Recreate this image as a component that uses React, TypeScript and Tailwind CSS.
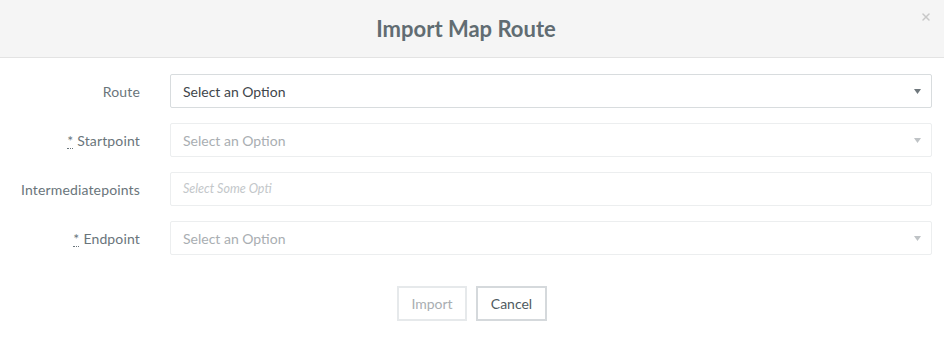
import { X } from 'lucide-react'

function Caret({ light }: { light?: boolean }) {
  return (
    <svg width="7" height="5" viewBox="0 0 7 5" className={light ? 'text-[#bfc3c6]' : 'text-[#6f777c]'}>
      <path d="M0 0 L7 0 L3.5 5 Z" fill="currentColor" />
    </svg>
  )
}

function Row({ label, required, children }: { label: string; required?: boolean; children: React.ReactNode }) {
  return (
    <div className="flex items-center">
      <label className="w-[140px] text-right text-[14px] tracking-[0.15px] text-[#6a757b] shrink-0">
        {required && (
          <abbr className="mr-1 no-underline border-b border-dotted border-[#6a757b] leading-[8px] inline-block h-[12px]">*</abbr>
        )}
        {label}
      </label>
      <div className="ml-[30px] flex-1 mr-[12px]">{children}</div>
    </div>
  )
}

export default function App() {
  return (
    <div className="w-[944px] h-[337px] bg-white font-['Lato',sans-serif]">
      {/* Header */}
      <div className="relative h-[58px] bg-[#f5f5f5] border-b border-[#e3e3e3] flex items-center justify-center">
        <h2 className="pr-[12px] text-[22px] font-bold text-[#616c72]">
          Import Map Route
        </h2>
        <button className="absolute right-[12px] top-[11px] text-[#c8c8c8]">
          <X className="h-[12px] w-[12px]" strokeWidth={3} />
        </button>
      </div>

      {/* Form */}
      <div className="pt-[16px] flex flex-col gap-[15px]">
        <Row label="Route">
          <div className="h-[34px] border border-[#d8dcde] rounded-[2px] flex items-center justify-between pl-[12px] pr-[10px]">
            <span className="text-[14px] text-[#3f464b]">Select an Option</span>
            <Caret />
          </div>
        </Row>
        <Row label="Startpoint" required>
          <div className="h-[34px] border border-[#eceeef] rounded-[2px] flex items-center justify-between pl-[12px] pr-[10px]">
            <span className="text-[14px] text-[#a9aeb2]">Select an Option</span>
            <Caret light />
          </div>
        </Row>
        <Row label="Intermediatepoints">
          <div className="h-[34px] border border-[#eceeef] rounded-[2px] flex items-center pl-[12px]">
            <span className="text-[12.5px] italic text-[#c3c7ca]">Select Some Opti</span>
          </div>
        </Row>
        <Row label="Endpoint" required>
          <div className="h-[34px] border border-[#eceeef] rounded-[2px] flex items-center justify-between pl-[12px] pr-[10px]">
            <span className="text-[14px] text-[#a9aeb2]">Select an Option</span>
            <Caret light />
          </div>
        </Row>
      </div>

      {/* Actions */}
      <div className="mt-[31px] flex justify-center gap-[9px]">
        <button className="h-[35px] w-[70px] border-2 border-[#e6e9eb] text-[14px] text-[#a9aeb2]">Import</button>
        <button className="h-[35px] w-[71px] border-2 border-[#d5d9dc] text-[14px] text-[#4f5a61]">Cancel</button>
      </div>
    </div>
  )
}
